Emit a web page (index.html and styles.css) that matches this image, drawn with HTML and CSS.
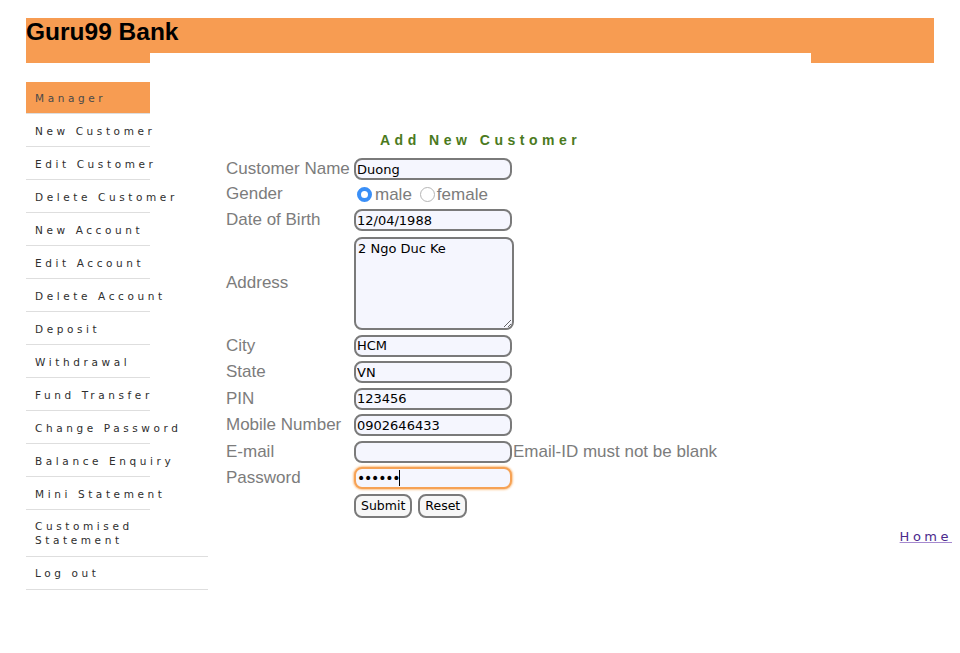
FILE: index.html
```html
<!DOCTYPE html>
<html>
<head>
<meta charset="utf-8">
<title>Guru99 Bank</title>
<link rel="stylesheet" href="styles.css">
</head>
<body>
<div class="page">
  <div class="header">
    <div class="title-bar"><h1 class="brand">Guru99 Bank</h1></div>
    <div class="sub-bar">
      <div class="sub-left"></div>
      <div class="sub-mid"></div>
      <div class="sub-right"></div>
    </div>
  </div>

  <div class="main">
    <ul class="menu">
      <li class="item active">Manager</li>
      <li class="item">New Customer</li>
      <li class="item">Edit Customer</li>
      <li class="item">Delete Customer</li>
      <li class="item">New Account</li>
      <li class="item">Edit Account</li>
      <li class="item">Delete Account</li>
      <li class="item">Deposit</li>
      <li class="item">Withdrawal</li>
      <li class="item">Fund Transfer</li>
      <li class="item">Change Password</li>
      <li class="item">Balance Enquiry</li>
      <li class="item">Mini Statement</li>
      <li class="item wide">Customised Statement</li>
      <li class="item wide">Log out</li>
    </ul>

    <div class="content">
      <div class="form-title">Add New Customer</div>
      <form class="form">
        <label class="lbl">Customer Name</label>
        <input class="field" type="text" value="Duong">
        <span></span>

        <label class="lbl lbl-gender">Gender</label>
        <div class="gender">
          <input class="radio" type="radio" name="g" checked><span class="opt">male</span>
          <input class="radio radio2" type="radio" name="g"><span class="opt">female</span>
        </div>
        <span></span>

        <label class="lbl">Date of Birth</label>
        <input class="field" type="text" value="12/04/1988">
        <span></span>

        <label class="lbl">Address</label>
        <textarea class="area">2 Ngo Duc Ke</textarea>
        <span></span>

        <label class="lbl">City</label>
        <input class="field" type="text" value="HCM">
        <span></span>

        <label class="lbl">State</label>
        <input class="field" type="text" value="VN">
        <span></span>

        <label class="lbl">PIN</label>
        <input class="field" type="text" value="123456">
        <span></span>

        <label class="lbl">Mobile Number</label>
        <input class="field" type="text" value="0902646433">
        <span></span>

        <label class="lbl">E-mail</label>
        <input class="field" type="text" value="">
        <span class="msg">Email-ID must not be blank</span>

        <label class="lbl">Password</label>
        <span class="pw"><input class="field focus pass" type="password" value="123456"><span class="caret"></span></span>
        <span></span>

        <span></span>
        <div class="buttons">
          <button type="button" class="btn">Submit</button>
          <button type="button" class="btn">Reset</button>
        </div>
        <span></span>
      </form>
      <div class="home-row"><a class="home" href="#">Home</a></div>
    </div>
  </div>
</div>
</body>
</html>
```

FILE: styles.css
```css
html, body {
  margin: 0;
  padding: 0;
  background: #ffffff;
}

.page {
  padding: 18px 8px 0 26px;
  font-family: "Liberation Sans", Arial, sans-serif;
}

.header {
  width: 908px;
}

.title-bar {
  background: #f79c52;
  height: 35px;
}

.brand {
  margin: 0;
  font-family: "Liberation Sans", Arial, sans-serif;
  font-weight: bold;
  font-size: 24.5px;
  line-height: 28px;
  color: #000;
}

.sub-bar {
  display: flex;
  height: 10px;
}

.sub-left {
  width: 124px;
  background: #f79c52;
}

.sub-mid {
  flex: 1;
}

.sub-right {
  width: 123px;
  background: #f79c52;
}

.main {
  display: flex;
  margin-top: 19px;
}

.menu {
  list-style: none;
  margin: 0;
  padding: 0;
  width: 182px;
  flex: none;
}

.item {
  width: 124px;
  box-sizing: border-box;
  padding: 10px 0 8px 9px;
  line-height: 14px;
  font-family: "DejaVu Sans", "Lucida Grande", sans-serif;
  font-size: 10.5px;
  letter-spacing: 3.6px;
  color: #2e2e2e;
  border-bottom: 1px solid #dedede;
  white-space: nowrap;
}

.item.active {
  background: #f79c52;
  color: #4a4a4a;
  height: 32px;
  padding-top: 9px;
  padding-bottom: 9px;
}

.item.wide {
  width: 182px;
  white-space: normal;
  padding-top: 9px;
  padding-bottom: 9px;
}

.content {
  flex: 1;
  padding-left: 18px;
}

.form-title {
  margin-top: 50px;
  margin-left: 154px;
  font-family: "Liberation Sans", Arial, sans-serif;
  font-weight: bold;
  font-size: 14px;
  line-height: 16px;
  letter-spacing: 4.5px;
  color: #4b7a1d;
}

.form {
  margin-top: 10px;
  display: grid;
  grid-template-columns: 128px max-content max-content;
  row-gap: 4.5px;
  align-items: center;
}

.lbl {
  font-family: "Liberation Sans", Arial, sans-serif;
  font-size: 17px;
  color: #7c7c7c;
  line-height: 20px;
  white-space: nowrap;
}

.lbl-gender {
  position: relative;
  top: -1px;
}

.field {
  box-sizing: border-box;
  width: 158px;
  height: 22px;
  margin: 0;
  padding: 0 1px;
  border: 2px solid #7a7a7a;
  border-radius: 8px;
  background: #f5f6fe;
  font-family: "DejaVu Sans", "Lucida Grande", sans-serif;
  font-size: 13px;
  color: #000;
  outline: none;
}

.field.focus {
  border-color: #f6a255;
  box-shadow: 0 0 2px 1px #fbc58f;
}

.field.pass {
  font-size: 14px;
  letter-spacing: -1.2px;
}

.pw {
  position: relative;
  display: inline-block;
  width: 158px;
  height: 22px;
}

.caret {
  position: absolute;
  left: 45px;
  top: 3px;
  width: 1px;
  height: 16px;
  background: #000;
}

.area {
  box-sizing: border-box;
  width: 160px;
  height: 93px;
  margin: 1.5px 0 0 0;
  padding: 2px 2px;
  border: 2px solid #7a7a7a;
  border-radius: 8px;
  background: #f5f6fe;
  font-family: "DejaVu Sans", "Lucida Grande", sans-serif;
  font-size: 13px;
  color: #000;
  display: block;
}

.gender {
  display: flex;
  align-items: center;
  height: 20px;
}

.radio {
  appearance: none;
  -webkit-appearance: none;
  box-sizing: border-box;
  width: 15px;
  height: 15px;
  margin: 0 3px 0 3px;
  border-radius: 50%;
  border: 1px solid #b5b5b5;
  background: #fff;
}

.radio:checked {
  border: 4.5px solid #3a8ff7;
  background: #ffffff;
}

.radio2 {
  margin-left: 8px;
  margin-right: 2px;
}

.opt {
  font-family: "Liberation Sans", Arial, sans-serif;
  font-size: 17px;
  color: #7c7c7c;
}

.msg {
  font-family: "Liberation Sans", Arial, sans-serif;
  font-size: 17px;
  color: #7c7c7c;
  white-space: nowrap;
  margin-left: -1px;
}

.buttons {
  display: flex;
  gap: 6px;
}

.btn {
  box-sizing: border-box;
  height: 24px;
  margin: 0;
  padding: 0 5px;
  border: 2px solid #7a7a7a;
  border-radius: 8px;
  background: #f7f7f7;
  font-family: "DejaVu Sans", "Lucida Grande", sans-serif;
  font-size: 12.5px;
  color: #000;
}

.home-row {
  text-align: right;
  margin-top: 9px;
}

.home {
  font-family: "DejaVu Sans", sans-serif;
  font-size: 13px;
  line-height: 16px;
  letter-spacing: 3.5px;
  color: #4b2a8c;
  text-decoration: underline;
  text-decoration-color: #a589cf;
}
```
